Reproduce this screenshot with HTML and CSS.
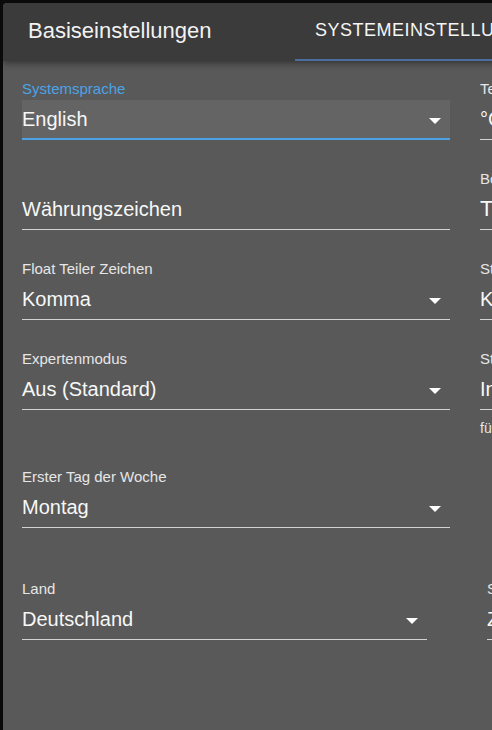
FILE: index.html
```html
<!DOCTYPE html>
<html lang="de">
<head>
    <meta charset="UTF-8">
    <meta name="viewport" content="width=device-width, initial-scale=1.0">
    <title>Basiseinstellungen</title>
    <link rel="stylesheet" href="styles.css">
</head>
<body>
<div class="dialog">
    <!-- Dialog header with tabs -->
    <header class="dialog-bar">
        <h2 class="dialog-title">Basiseinstellungen</h2>
        <div class="tabs">
            <div class="tab tab-active">Systemeinstellungen</div>
            <div class="tab">Lizenzen</div>
        </div>
    </header>

    <div class="dialog-body">
        <div class="fields">
            <!-- Systemsprache -->
            <div class="field field-focused">
                <label class="field-label">Systemsprache</label>
                <div class="field-input">
                    <span class="field-value">English</span>
                    <svg class="field-arrow" width="12" height="6" viewBox="0 0 12 6"><path d="M0 0h12L6 6z"/></svg>
                </div>
            </div>
            <div class="field">
                <label class="field-label">Temperatureinheit</label>
                <div class="field-input">
                    <span class="field-value">°C</span>
                    <svg class="field-arrow" width="12" height="6" viewBox="0 0 12 6"><path d="M0 0h12L6 6z"/></svg>
                </div>
            </div>

            <!-- Währungszeichen -->
            <div class="field">
                <label class="field-label"></label>
                <div class="field-input">
                    <span class="field-value">Währungszeichen</span>
                </div>
            </div>
            <div class="field">
                <label class="field-label">Bevorzugtes Datumsformat</label>
                <div class="field-input">
                    <span class="field-value field-value-large">TT.MM.JJJJ</span>
                </div>
            </div>

            <!-- Float Teiler Zeichen -->
            <div class="field">
                <label class="field-label">Float Teiler Zeichen</label>
                <div class="field-input">
                    <span class="field-value">Komma</span>
                    <svg class="field-arrow" width="12" height="6" viewBox="0 0 12 6"><path d="M0 0h12L6 6z"/></svg>
                </div>
            </div>
            <div class="field">
                <label class="field-label">Standard History</label>
                <div class="field-input">
                    <span class="field-value">Keine</span>
                    <svg class="field-arrow" width="12" height="6" viewBox="0 0 12 6"><path d="M0 0h12L6 6z"/></svg>
                </div>
            </div>

            <!-- Expertenmodus -->
            <div class="field">
                <label class="field-label">Expertenmodus</label>
                <div class="field-input">
                    <span class="field-value">Aus (Standard)</span>
                    <svg class="field-arrow" width="12" height="6" viewBox="0 0 12 6"><path d="M0 0h12L6 6z"/></svg>
                </div>
            </div>
            <div class="field">
                <label class="field-label">Standard Repository</label>
                <div class="field-input">
                    <span class="field-value">Intern</span>
                    <svg class="field-arrow" width="12" height="6" viewBox="0 0 12 6"><path d="M0 0h12L6 6z"/></svg>
                </div>
                <div class="field-hint">für neue Installationen</div>
            </div>

            <!-- Erster Tag der Woche -->
            <div class="field">
                <label class="field-label">Erster Tag der Woche</label>
                <div class="field-input">
                    <span class="field-value">Montag</span>
                    <svg class="field-arrow" width="12" height="6" viewBox="0 0 12 6"><path d="M0 0h12L6 6z"/></svg>
                </div>
            </div>
        </div>

        <!-- Land / Stadt -->
        <div class="fields-location">
            <div class="field field-country">
                <label class="field-label">Land</label>
                <div class="field-input">
                    <span class="field-value">Deutschland</span>
                    <svg class="field-arrow" width="12" height="6" viewBox="0 0 12 6"><path d="M0 0h12L6 6z"/></svg>
                </div>
            </div>
            <div class="field field-city">
                <label class="field-label">Stadt</label>
                <div class="field-input">
                    <span class="field-value">Zürich</span>
                </div>
            </div>
        </div>
    </div>
</div>
</body>
</html>
```

FILE: styles.css
```css
html, body {
    margin: 0;
    height: 100%;
}

body {
    background-color: #0a0a0a;
    font-family: "Liberation Sans", Arial, sans-serif;
    overflow: hidden;
}

.dialog {
    margin: 3px 0 0 3px;
    width: 960px;
    height: 800px;
    background-color: #595959;
    border-radius: 4px 0 0 0;
    overflow: hidden;
}

/* Header */
.dialog-bar {
    position: relative;
    z-index: 1;
    display: flex;
    height: 58px;
    background-color: #3b3b3b;
    box-shadow: 0 2px 7px rgba(0, 0, 0, 0.45);
}

.dialog-title {
    width: 292px;
    box-sizing: border-box;
    margin: 0;
    padding: 15px 0 0 25px;
    font-size: 22px;
    font-weight: normal;
    line-height: 26px;
    color: #f2f2f2;
}

.tabs {
    display: flex;
}

.tab {
    box-sizing: border-box;
    height: 58px;
    padding: 16px 20px 0;
    font-size: 18px;
    line-height: 22px;
    letter-spacing: 0.5px;
    text-transform: uppercase;
    color: #f5f5f5;
    border-bottom: 2px solid transparent;
}

.tab-active {
    border-bottom-color: #4a6f9e;
}

/* Body */
.dialog-body {
    padding: 19px;
}

.fields {
    display: grid;
    grid-template-columns: 428px 428px;
    column-gap: 30px;
    row-gap: 30px;
}

.field-label {
    display: block;
    height: 18px;
    margin-bottom: 2px;
    font-size: 15px;
    line-height: 18px;
    color: #e6e6e6;
    white-space: nowrap;
}

.field-input {
    display: flex;
    align-items: center;
    height: 40px;
    box-sizing: border-box;
    padding: 7px 0 8px;
    border-bottom: 1px solid #d2d2d2;
}

.field-value {
    flex: 1;
    font-size: 20px;
    line-height: 24px;
    color: #f7f7f7;
    white-space: nowrap;
}

.field-value-large {
    font-size: 22px;
}

.field-arrow {
    margin: 3px 9px 0 0;
    fill: #ffffff;
}

.field-focused .field-label {
    color: #4ba3e6;
}

.field-focused .field-input {
    background-color: #646464;
    padding-bottom: 7px;
    border-bottom: 2px solid #4ba3e6;
}

.field-hint {
    margin-top: 8px;
    font-size: 14px;
    line-height: 20px;
    color: #e6e6e6;
}

.fields-location {
    display: flex;
    gap: 60px;
    margin-top: 52px;
}

.field-country {
    width: 405px;
}

.field-city {
    width: 405px;
}
```
